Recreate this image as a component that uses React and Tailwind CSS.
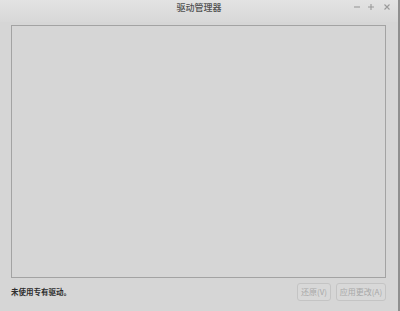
import React from 'react';

const font = { fontFamily: '"Noto Sans CJK SC", "Noto Sans", sans-serif' };

const App = () => {
    return (
        <div className="w-[400px] h-[311px] flex bg-[#8f8f8f] overflow-hidden" style={font}>
            <div className="w-[398px] h-full flex flex-col bg-[#d6d6d6]">
                {/* Title bar */}
                <div className="h-[22px] flex items-center relative bg-gradient-to-b from-[#e3e3e3] to-[#d8d8d8]">
                    <span className="flex-1 text-center text-[9px] font-medium text-[#4f4f4f] leading-none -mt-[8px]">驱动管理器</span>
                    <div className="absolute left-[354px] top-[4px] flex items-center gap-[8px] text-[#9a9a9a]">
                        <svg width="6" height="6" viewBox="0 0 6 6"><path d="M0 3h6" stroke="currentColor" strokeWidth="1.1" /></svg>
                        <svg width="6" height="6" viewBox="0 0 6 6"><path d="M0 3h6M3 0v6" stroke="currentColor" strokeWidth="1.1" /></svg>
                        <svg width="6" height="6" viewBox="0 0 6 6" className="ml-[2px]"><path d="M0.5 0.5l5 5M5.5 0.5l-5 5" stroke="currentColor" strokeWidth="1.1" /></svg>
                    </div>
                </div>

                {/* Content */}
                <div className="flex-1 flex flex-col pl-[11px] pr-[12px] pt-[3px] pb-[10px]">
                    <div className="flex-1 border border-[#a3a3a3] bg-[#d6d6d6]"></div>
                    <div className="h-[18px] mt-[5px] flex items-center justify-between">
                        <span className="text-[7.5px] font-bold text-[#2e2e2e]">未使用专有驱动。</span>
                        <div className="flex gap-[5px]">
                            <button disabled className="h-[18px] w-[34px] border border-[#c4c4c4] rounded-[3px] text-[8px] leading-none text-[#a8a8a8] bg-[#d8d8d8]">还原(V)</button>
                            <button disabled className="h-[18px] w-[50px] border border-[#c4c4c4] rounded-[3px] text-[8px] leading-none text-[#a8a8a8] bg-[#d8d8d8]">应用更改(A)</button>
                        </div>
                    </div>
                </div>
            </div>
        </div>
    );
};

export default App;
